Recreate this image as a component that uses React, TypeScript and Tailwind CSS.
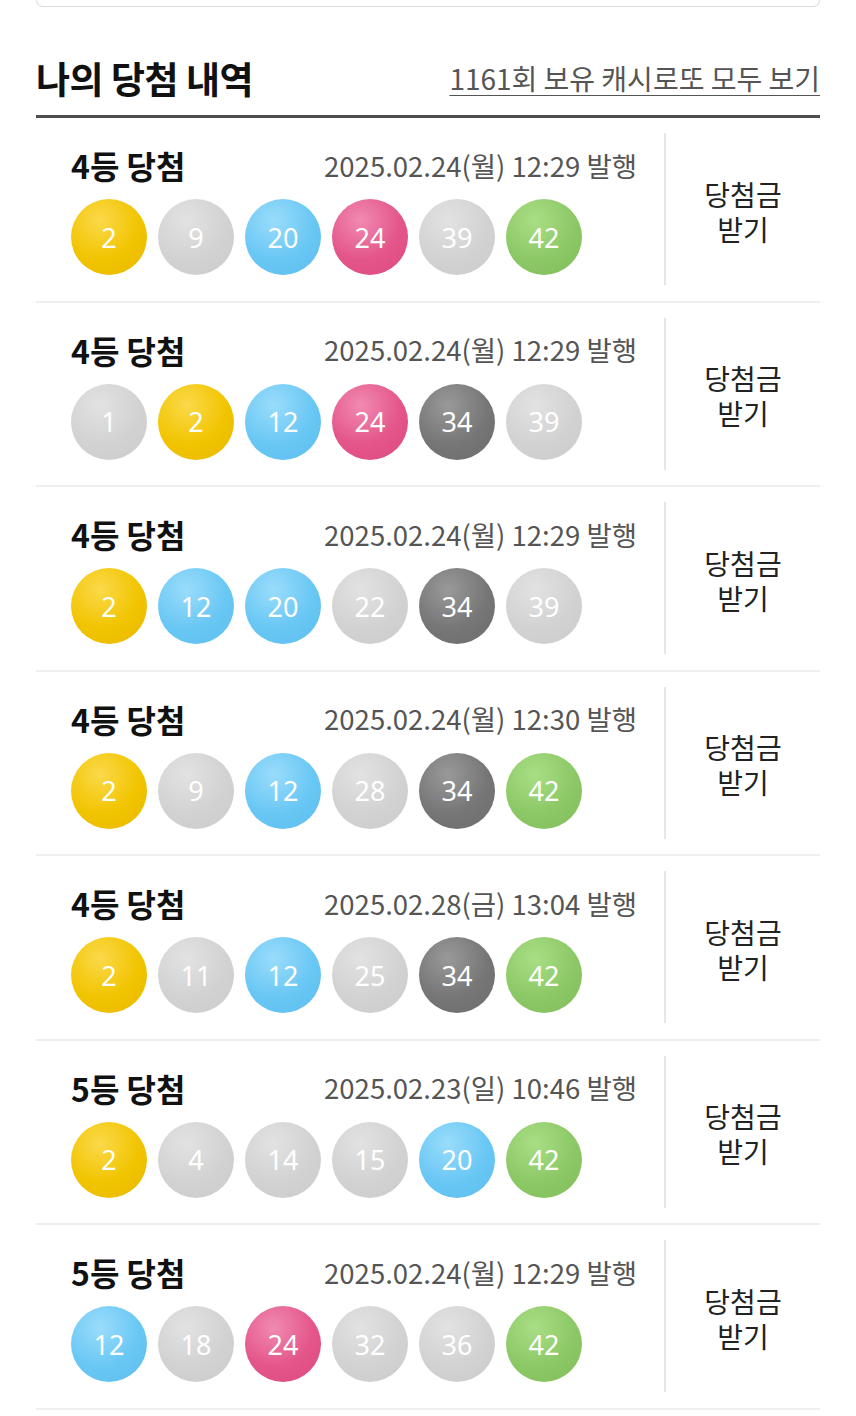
import React from "react";

type C = "Y" | "B" | "R" | "D" | "G" | "L";

const ballClass: Record<C, string> = {
  Y: "bg-[radial-gradient(circle_at_38%_28%,#fbd94a_0%,#f1c400_55%,#e8b800_100%)]",
  B: "bg-[radial-gradient(circle_at_38%_28%,#9adcfb_0%,#69c7f4_55%,#5dbdee_100%)]",
  R: "bg-[radial-gradient(circle_at_38%_28%,#f08ab0_0%,#e4558a_55%,#dc4a80_100%)]",
  D: "bg-[radial-gradient(circle_at_38%_28%,#999999_0%,#767676_55%,#6c6c6c_100%)]",
  G: "bg-[radial-gradient(circle_at_38%_28%,#a9de85_0%,#8cc866_55%,#80bf5a_100%)]",
  L: "bg-[radial-gradient(circle_at_38%_28%,#e2e2e2_0%,#d2d2d2_55%,#cbcbcb_100%)]",
};

type Row = { rank: string; date: string; balls: [number, C][] };

const rows: Row[] = [
  { rank: "4등 당첨", date: "2025.02.24(월) 12:29 발행", balls: [[2, "Y"], [9, "L"], [20, "B"], [24, "R"], [39, "L"], [42, "G"]] },
  { rank: "4등 당첨", date: "2025.02.24(월) 12:29 발행", balls: [[1, "L"], [2, "Y"], [12, "B"], [24, "R"], [34, "D"], [39, "L"]] },
  { rank: "4등 당첨", date: "2025.02.24(월) 12:29 발행", balls: [[2, "Y"], [12, "B"], [20, "B"], [22, "L"], [34, "D"], [39, "L"]] },
  { rank: "4등 당첨", date: "2025.02.24(월) 12:30 발행", balls: [[2, "Y"], [9, "L"], [12, "B"], [28, "L"], [34, "D"], [42, "G"]] },
  { rank: "4등 당첨", date: "2025.02.28(금) 13:04 발행", balls: [[2, "Y"], [11, "L"], [12, "B"], [25, "L"], [34, "D"], [42, "G"]] },
  { rank: "5등 당첨", date: "2025.02.23(일) 10:46 발행", balls: [[2, "Y"], [4, "L"], [14, "L"], [15, "L"], [20, "B"], [42, "G"]] },
  { rank: "5등 당첨", date: "2025.02.24(월) 12:29 발행", balls: [[12, "B"], [18, "L"], [24, "R"], [32, "L"], [36, "L"], [42, "G"]] },
];

export default function App() {
  return (
    <div
      className="w-[856px] min-h-[1416px] bg-white px-[36px]"
      style={{ fontFamily: '"Noto Sans CJK KR", "Noto Sans", sans-serif' }}
    >
      <div className="h-[7px] rounded-b-[10px] border-x border-b border-[#dcdcdc]" />
      <div className="mt-[43px] flex h-[56px] items-center justify-between">
        <h2 className="text-[37px] font-bold leading-none tracking-[-0.5px] text-[#111]">나의 당첨 내역</h2>
        <a className="text-[28px] leading-none text-[#555] underline decoration-1 underline-offset-[5px]">
          1161회 보유 캐시로또 모두 보기
        </a>
      </div>
      <div className="mt-[9px] h-[3px] bg-[#4d4d4d]" />
      {rows.map((r, i) => (
        <div key={i} className="flex h-[184.5px] items-center border-b-2 border-[#efefef]">
          <div className="flex h-[152px] w-[630px] flex-col border-r-2 border-[#e6e6e6] pl-[35px] pr-[27px] pt-[12px]">
            <div className="flex h-[40px] items-center justify-between">
              <span className="text-[32px] font-bold leading-none text-[#111]">{r.rank}</span>
              <span className="text-[27.5px] leading-none text-[#555]">{r.date}</span>
            </div>
            <div className="mt-[14px] flex gap-[11px]">
              {r.balls.map(([n, c], j) => (
                <div
                  key={j}
                  className={`flex h-[76px] w-[76px] items-center justify-center rounded-full text-[27px] leading-none text-white ${ballClass[c]}`}
                  style={{ fontFamily: '"Noto Sans", sans-serif' }}
                >
                  {n}
                </div>
              ))}
            </div>
          </div>
          <div className="flex flex-1 flex-col items-center justify-center gap-[3px] pt-[4px] text-center text-[28px] leading-[32px] text-[#222]">
            <span>당첨금</span>
            <span>받기</span>
          </div>
        </div>
      ))}
    </div>
  );
}
